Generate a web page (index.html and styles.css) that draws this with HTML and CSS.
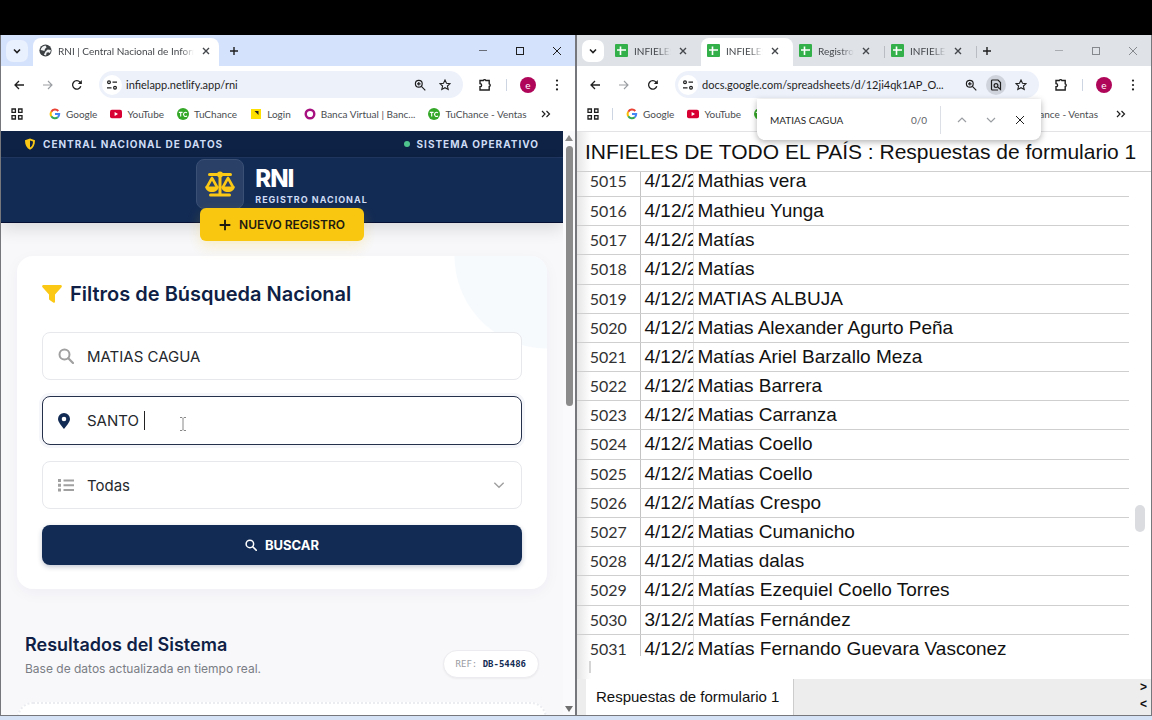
FILE: index.html
```html
<!DOCTYPE html>
<html lang="es">

<head>
    <title>RNI | Central Nacional de Información</title>
    <meta charset="utf-8">
    <meta name="viewport" content="width=device-width, initial-scale=1.0">
    <link rel="stylesheet" href="styles.css">
</head>

<body>

    <!-- iconos compartidos -->
    <svg class="sprite">
        <symbol id="i-chevron" viewBox="0 0 12 12"><path d="M3 4.5l3 3 3-3" fill="none" stroke="currentColor" stroke-width="1.6"/></symbol>
        <symbol id="i-up" viewBox="0 0 12 12"><path d="M2 8l4-4 4 4" fill="none" stroke="currentColor" stroke-width="1.2"/></symbol>
        <symbol id="i-down" viewBox="0 0 12 12"><path d="M2 4l4 4 4-4" fill="none" stroke="currentColor" stroke-width="1.2"/></symbol>
        <symbol id="i-close" viewBox="0 0 12 12"><path d="M3 3l6 6M9 3l-6 6" fill="none" stroke="currentColor" stroke-width="1.4"/></symbol>
        <symbol id="i-x" viewBox="0 0 12 12"><path d="M2 2l8 8M10 2l-8 8" fill="none" stroke="currentColor" stroke-width="1"/></symbol>
        <symbol id="i-plus" viewBox="0 0 12 12"><path d="M6 2v8M2 6h8" fill="none" stroke="currentColor" stroke-width="1.4"/></symbol>
        <symbol id="i-min" viewBox="0 0 12 12"><path d="M2 5.5h8" fill="none" stroke="currentColor" stroke-width="1" opacity=".6"/></symbol>
        <symbol id="i-max" viewBox="0 0 12 12"><rect x="2.5" y="2.5" width="7" height="7" fill="none" stroke="currentColor"/></symbol>
        <symbol id="i-back" viewBox="0 0 12 12"><path d="M11 6H2M6 2L2 6l4 4" fill="none" stroke="currentColor" stroke-width="1.3"/></symbol>
        <symbol id="i-fwd" viewBox="0 0 12 12"><path d="M1 6h9M6 2l4 4-4 4" fill="none" stroke="currentColor" stroke-width="1.1"/></symbol>
        <symbol id="i-reload" viewBox="0 0 12 12"><path d="M9.8 7.2A4.2 4.2 0 1 1 9 3.2l1.2 1.2" fill="none" stroke="currentColor" stroke-width="1.3"/><path d="M10.8 1v4h-4z" fill="currentColor"/></symbol>
        <symbol id="i-tune" viewBox="0 0 12 12"><g fill="none" stroke="currentColor" stroke-width="1.2"><circle cx="3" cy="3.2" r="1.4"/><path d="M6.5 3.2H11M1 8.8h4.5"/><circle cx="9" cy="8.8" r="1.4"/></g></symbol>
        <symbol id="i-zoom" viewBox="0 0 12 12"><g fill="none" stroke="currentColor" stroke-width="1.2"><circle cx="4.8" cy="4.8" r="3.4"/><path d="M7.4 7.4L11.3 11.3M3 4.8h3.6M4.8 3v3.6"/></g></symbol>
        <symbol id="i-star" viewBox="0 0 12 12"><path d="M6 1l1.5 3.2 3.6.4-2.7 2.4.8 3.5L6 8.7l-3.2 1.8.8-3.5L.9 4.6l3.6-.4z" fill="none" stroke="currentColor" stroke-width="1.1"/></symbol>
        <symbol id="i-puzzle" viewBox="0 0 14 14"><path d="M2 2.5h3.3a1.4 1.4 0 0 1 2.6 0h3.3v3.3a1.4 1.4 0 0 1 0 2.7V12H2V8.8a1.5 1.5 0 0 0 0-3.2z" fill="none" stroke="currentColor" stroke-width="1.4"/></symbol>
        <symbol id="i-dots" viewBox="0 0 12 12"><g fill="currentColor"><circle cx="6" cy="1.6" r="1.1"/><circle cx="6" cy="6" r="1.1"/><circle cx="6" cy="10.4" r="1.1"/></g></symbol>
        <symbol id="i-finddoc" viewBox="0 0 12 12"><path d="M8 11H2.5a1 1 0 0 1-1-1V2a1 1 0 0 1 1-1H8l2.5 2.5v7L8 8.3" fill="none" stroke="currentColor" stroke-width="1.2"/><circle cx="6" cy="6.6" r="1.9" fill="none" stroke="currentColor" stroke-width="1.2"/></symbol>
        <symbol id="i-apps" viewBox="0 0 12 12"><path d="M1 1h3.4v3.4H1zM7.6 1H11v3.4H7.6zM1 7.6h3.4V11H1zM7.6 7.6H11V11H7.6z" fill="none" stroke="currentColor" stroke-width="1.3"/></symbol>
        <symbol id="i-more" viewBox="0 0 12 12"><path d="M2 3l3 3-3 3M6.5 3l3 3-3 3" fill="none" stroke="currentColor" stroke-width="1.2"/></symbol>
        <symbol id="i-globe" viewBox="0 0 12 12"><circle cx="6" cy="6" r="5.6" fill="#3c4043"/><path d="M1.5 5.5C2 3 4 1.500 6 1.300L7 3 5.500 4.500 5 6.500 3.500 6zM8 5l3 .5-.8 2.800L8.500 7.500 7 8l-.5 2.500-2-.5L6 7z" fill="#f1f3f4"/></symbol>
        <symbol id="i-sheet" viewBox="0 0 13 13"><rect width="13" height="13" rx="1" fill="#34b04a"/><path d="M2 6h9M5.500 2.500V11" stroke="#fff" stroke-width="1.6"/></symbol>
        <symbol id="i-google" viewBox="0 0 12 12"><g fill="none" stroke-width="2"><path d="M9.300 3A4.300 4.300 0 0 0 2.300 3.700" stroke="#ea4335"/><path d="M2.300 3.700a4.300 4.300 0 0 0 0 4.500" stroke="#fbbc05"/><path d="M2.300 8.200a4.300 4.300 0 0 0 6.500 1" stroke="#34a853"/><path d="M8.800 9.200A4.300 4.300 0 0 0 10.200 6H6" stroke="#4285f4"/></g></symbol>
        <symbol id="i-youtube" viewBox="0 0 13 12"><rect y="1.500" width="13" height="9" rx="2" fill="#d80032"/><path d="M5 3.900v4.200L8.700 6z" fill="#fff"/></symbol>
        <symbol id="i-tc" viewBox="0 0 13 13"><circle cx="6.500" cy="6.500" r="6.500" fill="#35a829"/><path d="M2 4.700h4M4 4.700v4.600M10.800 5.300a2.200 2.200 0 1 0 0 3.200" fill="none" stroke="#fff" stroke-width="1.2"/></symbol>
        <symbol id="i-login" viewBox="0 0 12 12"><rect x="1" y="1" width="10" height="10" fill="#fde000"/><path d="M4.500 3h4v4L7 5.500z" fill="#222"/></symbol>
        <symbol id="i-ring" viewBox="0 0 12 12"><circle cx="6" cy="6" r="4.300" fill="none" stroke="#a6107f" stroke-width="2.400"/></symbol>
        <symbol id="i-search" viewBox="0 0 16 16"><circle cx="6.500" cy="6.500" r="5" fill="none" stroke="currentColor" stroke-width="2"/><path d="M10.300 10.300L15 15" stroke="currentColor" stroke-width="2.200" stroke-linecap="round"/></symbol>
    </svg>

    <main>
        <!-- ventana izquierda -->
        <section class="window">
            <div class="tabs">
                <button class="tab-search" aria-label="Buscar pestañas"><svg><use href="#i-chevron"/></svg></button>
                <div class="tab wide active">
                    <svg><use href="#i-globe"/></svg>
                    <span>RNI | Central Nacional de Inform</span>
                    <button aria-label="Cerrar"><svg><use href="#i-close"/></svg></button>
                </div>
                <button class="new" aria-label="Nueva pestaña"><svg><use href="#i-plus"/></svg></button>
                <div class="controls">
                    <button aria-label="Minimizar"><svg><use href="#i-min"/></svg></button>
                    <button aria-label="Maximizar"><svg><use href="#i-max"/></svg></button>
                    <button aria-label="Cerrar ventana"><svg><use href="#i-x"/></svg></button>
                </div>
            </div>
            <div class="toolbar">
                <button aria-label="Atrás"><svg><use href="#i-back"/></svg></button>
                <button class="off" aria-label="Adelante"><svg><use href="#i-fwd"/></svg></button>
                <button aria-label="Recargar"><svg><use href="#i-reload"/></svg></button>
                <div class="omnibox">
                    <span class="tune"><svg><use href="#i-tune"/></svg></span>
                    <input type="text" value="infielapp.netlify.app/rni" aria-label="Dirección">
                    <button aria-label="Zoom"><svg><use href="#i-zoom"/></svg></button>
                    <button aria-label="Favorito"><svg><use href="#i-star"/></svg></button>
                </div>
                <button class="ext" aria-label="Extensiones"><svg><use href="#i-puzzle"/></svg></button>
                <span class="sep"></span>
                <button class="avatar">e</button>
                <button aria-label="Menú"><svg><use href="#i-dots"/></svg></button>
            </div>
            <nav class="bookmarks">
                <button aria-label="Aplicaciones"><svg><use href="#i-apps"/></svg></button>
                <span class="sep"></span>
                <a href="#"><svg><use href="#i-google"/></svg>Google</a>
                <a href="#"><svg><use href="#i-youtube"/></svg>YouTube</a>
                <a href="#"><svg><use href="#i-tc"/></svg>TuChance</a>
                <a href="#"><svg><use href="#i-login"/></svg>Login</a>
                <a href="#"><svg><use href="#i-ring"/></svg>Banca Virtual | Banc...</a>
                <a href="#"><svg><use href="#i-tc"/></svg>TuChance - Ventas</a>
                <button class="more" aria-label="Más"><svg><use href="#i-more"/></svg></button>
            </nav>

            <div class="view">
                <div class="page">
                    <div class="topbar">
                        <span><svg viewBox="0 0 12 12"><path d="M6 .5l5 1.800C11 7 9.500 10 6 11.700 2.500 10 1 7 1 2.300z" fill="#fac815"/><path d="M6 2.500l3 1c0 3-1 4.800-3 6z" fill="#0d2244"/></svg>CENTRAL NACIONAL DE DATOS</span>
                        <span><i class="dot"></i>SISTEMA OPERATIVO</span>
                    </div>
                    <header>
                        <div class="brand">
                            <div class="logo">
                                <svg viewBox="0 0 32 26"><g fill="none" stroke="#fac815" stroke-width="3" stroke-linecap="round" stroke-linejoin="round"><path d="M5.500 3.500h21M16 3v20M6.500 24h19"/><path d="M8 7L3 16M8 7l5 9M24 7l-5 9M24 7l5 9" stroke-width="2.600"/></g><circle cx="16" cy="3.500" r="3" fill="#fac815"/><path d="M1 15.500h14c-.6 3.500-3.200 5.500-7 5.500s-6.400-2-7-5.500zM17 15.500h14c-.6 3.500-3.200 5.500-7 5.500s-6.400-2-7-5.500z" fill="#fac815"/></svg>
                            </div>
                            <div>
                                <h1>RNI</h1>
                                <p>REGISTRO NACIONAL</p>
                            </div>
                        </div>
                        <button class="nuevo"><svg><use href="#i-plus"/></svg>NUEVO REGISTRO</button>
                    </header>

                    <form class="card">
                        <h2><svg viewBox="0 0 20 18"><path d="M1.500 0h17c1.200 0 1.800 1.300 1 2.200L13 9.500v7.200c0 1-1 1.500-1.800.9L7.600 15c-.4-.3-.6-.6-.6-1V9.500L.5 2.200C-.3 1.300.3 0 1.500 0z" fill="#fac815"/></svg>Filtros de Búsqueda Nacional</h2>
                        <label class="field">
                            <svg><use href="#i-search"/></svg>
                            <input type="text" value="MATIAS CAGUA" aria-label="Nombre">
                        </label>
                        <label class="field focus">
                            <svg viewBox="0 0 16 16"><path d="M6 0a6 6 0 0 1 6 6c0 3-4 7.500-6 10C4 13.500 0 9 0 6a6 6 0 0 1 6-6zm0 3.700a2.300 2.300 0 1 0 0 4.600 2.300 2.300 0 0 0 0-4.600z" fill="#122b54"/></svg>
                            <input type="text" value="SANTO " aria-label="Ciudad">
                            <span class="caret"></span>
                            <svg class="pointer" viewBox="0 0 8 14"><path d="M1 .5h2l1 1 1-1h2M4 1.500v11M1 13.500h2l1-1 1 1h2" fill="none" stroke="#888"/></svg>
                        </label>
                        <label class="field">
                            <svg viewBox="0 0 16 16"><path d="M0 2h3v3H0zM0 6.700h3v3H0zM0 11.400h3v3H0zM5.500 2.500H16v2H5.500zM5.500 7.200H16v2H5.500zM5.500 11.900H16v2H5.500z" fill="#a0a0a0"/></svg>
                            <select aria-label="Categoría"><option>Todas</option></select>
                            <svg class="arrow"><use href="#i-down"/></svg>
                        </label>
                        <button class="buscar" type="button"><svg><use href="#i-search"/></svg>BUSCAR</button>
                    </form>

                    <div class="results">
                        <div>
                            <h3>Resultados del Sistema</h3>
                            <p>Base de datos actualizada en tiempo real.</p>
                        </div>
                        <span class="ref">REF: <b>DB-54486</b></span>
                    </div>
                    <div class="empty"></div>
                </div>
                <div class="scroll">
                    <i class="up"></i>
                    <i class="thumb"></i>
                    <i class="down"></i>
                </div>
            </div>
        </section>

        <!-- ventana derecha -->
        <section class="window inactive">
            <div class="tabs">
                <button class="tab-search" aria-label="Buscar pestañas"><svg><use href="#i-chevron"/></svg></button>
                <div class="tab">
                    <svg><use href="#i-sheet"/></svg>
                    <span>INFIELES</span>
                    <button aria-label="Cerrar"><svg><use href="#i-close"/></svg></button>
                </div>
                <div class="tab active">
                    <svg><use href="#i-sheet"/></svg>
                    <span>INFIELES</span>
                    <button aria-label="Cerrar"><svg><use href="#i-close"/></svg></button>
                </div>
                <div class="tab line">
                    <svg><use href="#i-sheet"/></svg>
                    <span>Registro</span>
                    <button aria-label="Cerrar"><svg><use href="#i-close"/></svg></button>
                </div>
                <div class="tab line">
                    <svg><use href="#i-sheet"/></svg>
                    <span>INFIELES</span>
                    <button aria-label="Cerrar"><svg><use href="#i-close"/></svg></button>
                </div>
                <button class="new" aria-label="Nueva pestaña"><svg><use href="#i-plus"/></svg></button>
                <div class="controls">
                    <button aria-label="Minimizar"><svg><use href="#i-min"/></svg></button>
                    <button aria-label="Maximizar"><svg><use href="#i-max"/></svg></button>
                    <button aria-label="Cerrar ventana"><svg><use href="#i-x"/></svg></button>
                </div>
            </div>
            <div class="toolbar">
                <button aria-label="Atrás"><svg><use href="#i-back"/></svg></button>
                <button class="off" aria-label="Adelante"><svg><use href="#i-fwd"/></svg></button>
                <button aria-label="Recargar"><svg><use href="#i-reload"/></svg></button>
                <div class="omnibox">
                    <span class="tune"><svg><use href="#i-tune"/></svg></span>
                    <input type="text" value="docs.google.com/spreadsheets/d/12ji4qk1AP_O..." aria-label="Dirección">
                    <button aria-label="Zoom"><svg><use href="#i-zoom"/></svg></button>
                    <button class="on" aria-label="Buscar en la página"><svg><use href="#i-finddoc"/></svg></button>
                    <button aria-label="Favorito"><svg><use href="#i-star"/></svg></button>
                </div>
                <button class="ext" aria-label="Extensiones"><svg><use href="#i-puzzle"/></svg></button>
                <span class="sep"></span>
                <button class="avatar">e</button>
                <button aria-label="Menú"><svg><use href="#i-dots"/></svg></button>
            </div>
            <nav class="bookmarks">
                <button aria-label="Aplicaciones"><svg><use href="#i-apps"/></svg></button>
                <span class="sep"></span>
                <a href="#"><svg><use href="#i-google"/></svg>Google</a>
                <a href="#"><svg><use href="#i-youtube"/></svg>YouTube</a>
                <a href="#" aria-label="TuChance"><svg><use href="#i-tc"/></svg></a>
                <a href="#" class="last">ance - Ventas</a>
                <button class="more" aria-label="Más"><svg><use href="#i-more"/></svg></button>
            </nav>
            <div class="find">
                <input type="text" value="MATIAS CAGUA" aria-label="Buscar">
                <span>0/0</span>
                <button class="off" aria-label="Anterior"><svg><use href="#i-up"/></svg></button>
                <button class="off" aria-label="Siguiente"><svg><use href="#i-down"/></svg></button>
                <button aria-label="Cerrar"><svg><use href="#i-x"/></svg></button>
            </div>

            <div class="sheet">
                <h2>INFIELES DE TODO EL PAÍS : Respuestas de formulario 1</h2>
                <div class="grid">
                    <table>
                        <tr><th>5015</th><td>4/12/2</td><td>Mathias vera</td></tr>
                        <tr><th>5016</th><td>4/12/2</td><td>Mathieu Yunga</td></tr>
                        <tr><th>5017</th><td>4/12/2</td><td>Matías</td></tr>
                        <tr class="tall"><th>5018</th><td>4/12/2</td><td>Matías</td></tr>
                        <tr><th>5019</th><td>4/12/2</td><td>MATIAS ALBUJA</td></tr>
                        <tr><th>5020</th><td>4/12/2</td><td>Matias Alexander Agurto Peña</td></tr>
                        <tr><th>5021</th><td>4/12/2</td><td>Matías Ariel Barzallo Meza</td></tr>
                        <tr><th>5022</th><td>4/12/2</td><td>Matias Barrera</td></tr>
                        <tr><th>5023</th><td>4/12/2</td><td>Matias Carranza</td></tr>
                        <tr class="tall"><th>5024</th><td>4/12/2</td><td>Matias Coello</td></tr>
                        <tr><th>5025</th><td>4/12/2</td><td>Matias Coello</td></tr>
                        <tr><th>5026</th><td>4/12/2</td><td>Matías Crespo</td></tr>
                        <tr><th>5027</th><td>4/12/2</td><td>Matias Cumanicho</td></tr>
                        <tr><th>5028</th><td>4/12/2</td><td>Matias dalas</td></tr>
                        <tr class="tall"><th>5029</th><td>4/12/2</td><td>Matías Ezequiel Coello Torres</td></tr>
                        <tr><th>5030</th><td>3/12/2</td><td>Matías Fernández</td></tr>
                        <tr><th>5031</th><td>4/12/2</td><td>Matías Fernando Guevara Vasconez</td></tr>
                    </table>
                    <i class="bar"></i>
                </div>
                <div class="hscroll"><i></i></div>
                <div class="sheet-tabs">
                    <button class="sheet-tab">Respuestas de formulario 1</button>
                    <div class="arrows"><button>&gt;</button><button>&lt;</button></div>
                </div>
            </div>
        </section>
    </main>

</body>

</html>
```
FILE: styles.css
```css
* {
    box-sizing: border-box;
}

body {
    margin: 0;
    height: 100vh;
    padding: 35px 0 4px;
    background: linear-gradient(#000 35px, #d5e1f5 35px);
    font-family: Lato, "Open Sans", sans-serif;
    color: #1f1f1f;
    overflow: hidden;
}

.sprite {
    display: none;
}

button,
input,
select {
    font: inherit;
    color: inherit;
    border: 0;
    padding: 0;
    background: none;
    outline: 0;
}

h1,
h2,
h3,
p {
    margin: 0;
}

svg {
    display: block;
    flex: none;
    width: 12px;
    height: 12px;
}

main {
    display: grid;
    grid-template-columns: 1fr 1fr;
    height: 100%;
}

.window {
    position: relative;
    display: flex;
    flex-direction: column;
    min-width: 0;
    min-height: 0;
    background: #fff;
    border: 1px solid #76777c;
    border-top: 0;
}

/* pestañas */
.tabs {
    display: flex;
    align-items: center;
    height: 31px;
    flex: none;
    padding-left: 5px;
    background: #d5e2fc;
    font-size: 10px;
}

.inactive .tabs {
    background: #dfe3e8;
}

.tab-search {
    width: 22px;
    height: 22px;
    padding: 5px;
    margin-right: 5px;
    border-radius: 7px;
    background: #e9f0fe;
}

.inactive .tab-search {
    background: #fff;
}

.tab {
    display: flex;
    align-items: center;
    align-self: flex-end;
    gap: 6px;
    width: 92px;
    height: 28px;
    padding: 0 12px 3px 6px;
    color: #44474b;
}

.tab.wide {
    width: 186px;
    padding-right: 7px;
}

.tab > svg {
    width: 13px;
    height: 13px;
}

.tab span {
    flex: 1;
    min-width: 0;
    overflow: hidden;
    white-space: nowrap;
    -webkit-mask-image: linear-gradient(to left, transparent, #000 14px);
    mask-image: linear-gradient(to left, transparent, #000 14px);
}

.active {
    background: #fff;
    border-radius: 8px 8px 0 0;
}

.line {
    border-image: linear-gradient(transparent 8px, #b9bdc3 8px, #b9bdc3 20px, transparent 20px) 1;
    border-right: 1px solid;
}

.new {
    margin-left: 9px;
}

.inactive .new {
    margin-left: 4px;
}

.controls {
    display: flex;
    gap: 25px;
    margin-left: auto;
    padding-right: 12px;
}

.inactive .controls {
    color: #85888c;
}

/* barra de direcciones */
.toolbar {
    display: flex;
    align-items: center;
    flex: none;
    height: 37px;
    padding: 0 12px;
}

.toolbar > button {
    margin-right: 17px;
}

.toolbar > button:last-child {
    margin-right: 0;
}

.off {
    color: #9a9da1;
}

.omnibox {
    display: flex;
    align-items: center;
    gap: 13px;
    flex: 1;
    min-width: 0;
    height: 27px;
    margin-left: -1px;
    padding: 0 12px 0 3px;
    border-radius: 14px;
    background: #edf1fa;
    font-size: 11px;
}

.tune {
    padding: 4px;
    border-radius: 50%;
    background: #fff;
}

.omnibox input {
    flex: 1;
    min-width: 0;
    margin-left: -9px;
}

.on {
    margin: 0 -4px;
    padding: 4px;
    border-radius: 50%;
    background: #cfd3dc;
}

.ext {
    margin-left: 15px;
}

.ext svg {
    width: 14px;
    height: 14px;
}

.toolbar .ext {
    margin-right: 14px;
}

.sep {
    width: 1px;
    height: 12px;
    background: #cdd5e3;
}

.avatar {
    width: 16px;
    height: 16px;
    margin-left: 13px;
    border-radius: 50%;
    background: #b0065a;
    color: #fff;
    font-size: 10px;
    line-height: 14px;
}

.toolbar .avatar {
    margin-right: 15px;
}

/* marcadores */
.bookmarks {
    display: flex;
    align-items: center;
    gap: 13px;
    flex: none;
    height: 28px;
    padding: 0 24px 6px 10px;
    font-size: 10px;
    white-space: nowrap;
}

.bookmarks a {
    display: flex;
    align-items: center;
    gap: 5px;
    color: #4a4d51;
    text-decoration: none;
}

.more,
.last {
    margin-left: auto;
}

.last + .more {
    margin-left: 4px;
}

/* búsqueda en la página */
.find {
    position: absolute;
    top: 64px;
    right: 110px;
    display: flex;
    align-items: center;
    gap: 17px;
    width: 284px;
    height: 41px;
    padding: 0 15px 0 13px;
    border-radius: 0 0 8px 8px;
    background: #fff;
    box-shadow: 0 2px 6px rgba(0, 0, 0, .3);
    font-size: 10px;
}

.find input {
    flex: 1;
    min-width: 0;
}

.find span {
    height: 28px;
    margin-right: -2px;
    padding-right: 13px;
    border-right: 1px solid #dcdfe5;
    line-height: 28px;
    color: #5f6368;
}

/* página RNI */
.view {
    display: flex;
    flex: 1;
    min-height: 0;
}

.page {
    flex: 1;
    overflow: hidden;
    background: #f8f8fb;
    font-family: Inter, sans-serif;
    color: #0f1f45;
}

.topbar {
    display: flex;
    justify-content: space-between;
    align-items: center;
    height: 27px;
    padding: 0 24px 0 23px;
    background: #0d2244;
    border-bottom: 1px solid #203761;
    color: #cfdcf5;
    font-size: 10px;
    font-weight: 700;
    letter-spacing: 1px;
}

.topbar span {
    display: flex;
    align-items: center;
    gap: 7px;
}

.dot {
    width: 6px;
    height: 6px;
    border-radius: 50%;
    background: #4fc58d;
}

header {
    display: flex;
    flex-direction: column;
    align-items: center;
    height: 65px;
    padding-top: 1px;
    background: #122b54;
    border-bottom: 1px solid #050f33;
    box-shadow: 0 6px 16px rgba(0, 0, 0, .12);
}

.brand {
    display: flex;
    align-items: center;
    gap: 11px;
    color: #fff;
}

.logo {
    padding: 11px 7px;
    border: 1px solid #3a5075;
    border-radius: 8px;
    background: #2a4066;
}

.logo svg {
    width: 32px;
    height: 26px;
}

h1 {
    padding-top: 3px;
    font-size: 24px;
    line-height: 28px;
    font-weight: 800;
    letter-spacing: -1px;
}

.brand p {
    color: #cfdcf5;
    font-size: 9px;
    line-height: 14px;
    font-weight: 700;
    letter-spacing: 1px;
}

.nuevo {
    display: flex;
    align-items: center;
    gap: 6px;
    flex: none;
    height: 33px;
    margin-top: -1px;
    padding: 0 19px 0 17px;
    border-radius: 6px;
    background: #f9c70f;
    box-shadow: 0 6px 14px rgba(250, 200, 21, .2);
    color: #1f1b10;
    font-size: 12px;
    font-weight: 600;
}

.nuevo svg {
    width: 16px;
    height: 16px;
}

.card {
    display: grid;
    gap: 16px;
    margin: 33px 16px 0;
    padding: 24px 25px;
    border-radius: 16px;
    background: radial-gradient(circle at 100% 0, #f7fafd 92px, #fff 93px);
    box-shadow: 0 4px 16px rgba(20, 30, 80, .04);
}

.card h2 {
    display: flex;
    align-items: center;
    gap: 8px;
    margin-bottom: 8px;
    font-size: 20px;
    line-height: 28px;
    font-weight: 600;
}

.card h2 svg {
    width: 20px;
    height: 18px;
}

.field {
    position: relative;
    display: flex;
    align-items: center;
    gap: 13px;
    height: 48px;
    padding: 0 15px;
    border: 1px solid #e7e8ec;
    border-radius: 8px;
    background: #fff;
    color: #25282d;
    font-size: 15px;
}

.field > svg {
    width: 16px;
    height: 16px;
    color: #a0a0a0;
}

.field .arrow {
    width: 14px;
    height: 14px;
}

.field input,
.field select {
    flex: 1;
    min-width: 0;
    appearance: none;
}

.focus {
    height: 49px;
    border-color: #25304a;
    box-shadow: 0 0 0 3px #f5f6f9;
}

.caret {
    position: absolute;
    left: 101px;
    top: 14px;
    width: 1px;
    height: 19px;
    background: #222;
}

.field .pointer {
    position: absolute;
    left: 136px;
    top: 20px;
    width: 8px;
    height: 14px;
}

.buscar {
    display: flex;
    align-items: center;
    justify-content: center;
    gap: 8px;
    height: 40px;
    border-radius: 8px;
    background: #122b54;
    box-shadow: 0 2px 5px rgba(18, 43, 84, .25);
    color: #fff;
    font-size: 13px;
    font-weight: 700;
}

.results {
    display: flex;
    justify-content: space-between;
    align-items: flex-end;
    margin: 41px 24px 24px;
}

h3 {
    font-size: 18px;
    line-height: 30px;
    font-weight: 600;
}

.results p {
    color: #7a7d84;
    font-size: 12px;
    line-height: 18px;
}

.ref {
    padding: 0 12px;
    border: 1px solid #ececf0;
    border-radius: 14px;
    background: #fff;
    box-shadow: 0 1px 2px rgba(0, 0, 0, .05);
    color: #9a9ca3;
    font: 9px/26px "DejaVu Sans Mono", monospace;
}

.ref b {
    color: #122b54;
}

.empty {
    height: 100px;
    margin: 0 16px;
    border: 2px dotted #ebecf0;
    border-radius: 16px;
    background: #fff;
}

.scroll {
    display: flex;
    flex-direction: column;
    align-items: center;
    width: 12px;
    padding: 4px 0 3px;
    background: #fafafc;
}

.up,
.down {
    border: 4px solid transparent;
    border-top: 0;
    border-bottom: 6px solid #8b8b8b;
}

.down {
    margin-top: auto;
    border-top: 6px solid #6f6f6f;
    border-bottom: 0;
}

.thumb {
    width: 7px;
    height: 45%;
    margin-top: 5px;
    border-radius: 4px;
    background: #8b8b8b;
}

/* hoja de cálculo */
.sheet {
    display: flex;
    flex-direction: column;
    flex: 1;
    min-height: 0;
    border-top: 1px solid #e3e3e6;
    background: linear-gradient(to right, #e6e6e6, #fff 14px);
    font-family: "Liberation Sans", sans-serif;
    color: #111;
}

.sheet h2 {
    flex: none;
    height: 40px;
    padding-left: 8px;
    border-bottom: 1px solid #cfcfcf;
    font-size: 21px;
    line-height: 40px;
    font-weight: 400;
    white-space: nowrap;
}

.grid {
    display: flex;
    flex: 1;
    min-height: 0;
    padding-right: 22px;
    overflow: hidden;
    position: relative;
}

table {
    width: 100%;
    height: max-content;
    margin-top: -5px;
    border-collapse: collapse;
    table-layout: fixed;
}

tr {
    height: 29px;
}

.tall {
    height: 30px;
}

th,
td {
    padding: 0 0 0 4px;
    border-bottom: 1px solid #cfcfcf;
    font-size: 19px;
    line-height: 20px;
    white-space: nowrap;
    overflow: hidden;
}

th {
    width: 63px;
    padding: 0;
    border-right: 1px solid #c4c4c4;
    font: 400 16px/20px Lato, sans-serif;
    color: #333;
}

td:nth-child(2) {
    width: 53px;
    border-right: 1px solid #e0e0e0;
}

.bar {
    position: absolute;
    right: 6px;
    bottom: 124px;
    width: 10px;
    height: 27px;
    border-radius: 5px;
    background: #dadce0;
}

.hscroll {
    flex: none;
    height: 23px;
    padding: 5px 12px;
}

.hscroll i {
    display: block;
    width: 2px;
    height: 12px;
    background: #d5d5d5;
}

.sheet-tabs {
    display: flex;
    justify-content: space-between;
    flex: none;
    height: 36px;
    padding: 0 4px 0 9px;
    background: #ededed;
}

.sheet-tab {
    padding: 0 14px 2px 10px;
    border-right: 1px solid #ccc;
    background: #fff;
    font-size: 15px;
}

.arrows {
    display: flex;
    flex-direction: column;
    font: 700 12px/17px "Liberation Sans", sans-serif;
}
```
